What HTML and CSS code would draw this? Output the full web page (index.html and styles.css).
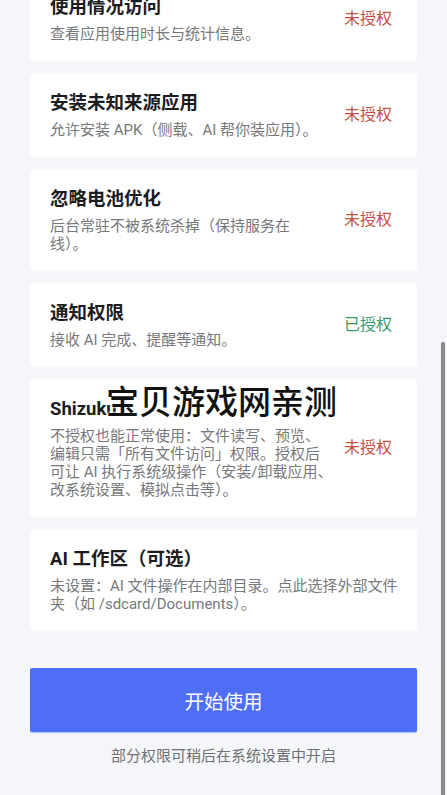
FILE: index.html
```html
<!DOCTYPE html>
<html lang="zh-CN">
<head>
    <meta charset="UTF-8">
    <meta name="viewport" content="width=device-width, initial-scale=1.0">
    <title>权限设置</title>
    <link rel="stylesheet" href="styles.css">
</head>
<body>

<div class="page">
    <div class="perm-list">
        <div class="perm-card">
            <div class="perm-text">
                <div class="perm-title">使用情况访问</div>
                <div class="perm-desc">查看应用使用时长与统计信息。</div>
            </div>
            <div class="perm-status denied">未授权</div>
        </div>

        <div class="perm-card">
            <div class="perm-text">
                <div class="perm-title">安装未知来源应用</div>
                <div class="perm-desc">允许安装 APK（侧载、AI 帮你装应用）。</div>
            </div>
            <div class="perm-status denied">未授权</div>
        </div>

        <div class="perm-card">
            <div class="perm-text">
                <div class="perm-title">忽略电池优化</div>
                <div class="perm-desc">后台常驻不被系统杀掉（保持服务在线）。</div>
            </div>
            <div class="perm-status denied">未授权</div>
        </div>

        <div class="perm-card">
            <div class="perm-text">
                <div class="perm-title">通知权限</div>
                <div class="perm-desc">接收 AI 完成、提醒等通知。</div>
            </div>
            <div class="perm-status granted">已授权</div>
        </div>

        <div class="perm-card">
            <div class="perm-text long">
                <div class="perm-title">Shizuku</div>
                <div class="perm-desc">不授权也能正常使用：文件读写、预览、编辑只需「所有文件访问」权限。授权后可让 AI 执行系统级操作（安装/卸载应用、改系统设置、模拟点击等）。</div>
            </div>
            <div class="perm-status denied">未授权</div>
        </div>

        <div class="perm-card">
            <div class="perm-text wide">
                <div class="perm-title">AI 工作区（可选）</div>
                <div class="perm-desc">未设置：AI 文件操作在内部目录。点此选择外部文件夹（如 /sdcard/Documents）。</div>
            </div>
        </div>
    </div>

    <button class="start-btn">开始使用</button>
    <p class="hint">部分权限可稍后在系统设置中开启</p>
</div>

<div class="watermark">宝贝游戏网亲测</div>
<div class="scrollbar"></div>

</body>
</html>
```

FILE: styles.css
```css
body {
    margin: 0;
    background-color: #f5f6f9;
    font-family: Roboto, "Noto Sans CJK SC", sans-serif;
    height: 795px;
    overflow: hidden;
    position: relative;
}

.page {
    padding: 0 30px;
}

.perm-list {
    display: flex;
    flex-direction: column;
    gap: 12px;
    margin-top: -23px;
}

.perm-card {
    background-color: #fff;
    border-radius: 4px;
    padding: 18px 25px 18px 20px;
    display: flex;
    align-items: center;
}

.perm-text {
    width: 277px;
    display: flex;
    flex-direction: column;
    gap: 6px;
}

.perm-text.long {
    width: 283px;
}

.perm-text.wide {
    width: auto;
    flex: 1;
    margin-right: -14px;
}

.perm-title {
    font-size: 18.5px;
    font-weight: bold;
    color: #1c1c1f;
    line-height: 24px;
}

.perm-desc {
    font-size: 15px;
    color: #77787c;
    line-height: 18px;
}

.perm-status {
    margin-left: auto;
    font-size: 16px;
    line-height: 22px;
}

.denied {
    color: #c4513f;
}

.granted {
    color: #3a9a6f;
}

.start-btn {
    display: block;
    width: 100%;
    height: 64px;
    margin-top: 37px;
    border: none;
    border-radius: 2px;
    background-color: #4f6ef8;
    color: #fff;
    font-family: inherit;
    font-size: 19.5px;
    box-shadow: 0 1px 1px rgba(79, 110, 248, 0.45);
}

.hint {
    margin: 13px 0 0;
    text-align: center;
    font-size: 15px;
    line-height: 22px;
    color: #6f7074;
}

.watermark {
    position: absolute;
    left: 106px;
    top: 380px;
    font-family: "Noto Sans CJK SC", sans-serif;
    font-size: 33px;
    font-weight: 500;
    line-height: 40px;
    color: #111;
    text-shadow: 0 0 2px #fff, 0 0 2px #fff, 0 0 3px #fff;
}

.scrollbar {
    position: absolute;
    right: 2px;
    top: 342px;
    width: 4px;
    height: 460px;
    border-radius: 2px;
    background-color: #8b8b8b;
    box-shadow: 0 0 1px #bbb;
}
```
